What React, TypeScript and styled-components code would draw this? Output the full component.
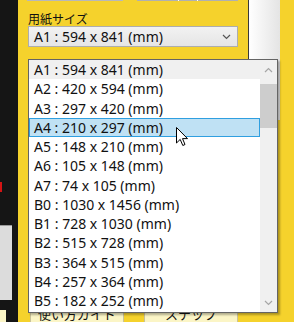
import styled, { createGlobalStyle } from 'styled-components';

const GlobalStyle = createGlobalStyle`
  html, body {
    margin: 0;
    padding: 0;
    background: #f5d22c;
  }
`;

const sizes = [
  'A1 : 594 x 841 (mm)',
  'A2 : 420 x 594 (mm)',
  'A3 : 297 x 420 (mm)',
  'A4 : 210 x 297 (mm)',
  'A5 : 148 x 210 (mm)',
  'A6 : 105 x 148 (mm)',
  'A7 : 74 x 105 (mm)',
  'B0 : 1030 x 1456 (mm)',
  'B1 : 728 x 1030 (mm)',
  'B2 : 515 x 728 (mm)',
  'B3 : 364 x 515 (mm)',
  'B4 : 257 x 364 (mm)',
  'B5 : 182 x 252 (mm)',
];

const Screen = styled.div`
  position: relative;
  display: flex;
  width: 294px;
  height: 322px;
  overflow: hidden;
  background: #f5d22c;
  font-family: 'Noto Sans', 'Noto Sans CJK JP', sans-serif;
  color: #111;
`;

const SidePanel = styled.div`
  display: flex;
  flex-direction: column;
  width: 18px;
  flex-shrink: 0;
  background: #151515;
`;

const RedMark = styled.div`
  margin-top: 182px;
  width: 2px;
  height: 10px;
  background: #d41414;
`;

const GreyPane = styled.div`
  margin-top: 33px;
  width: 12px;
  height: 77px;
  background: #dcdcdc;
  border-top: 1px solid #9a9a9a;
`;

const CreamTab = styled.div`
  margin-top: 10px;
  width: 6px;
  height: 12px;
  background: #fbf5c6;
`;

const Main = styled.div`
  display: flex;
  gap: 10px;
  padding-left: 10px;
`;

const Column = styled.div`
  display: flex;
  flex-direction: column;
  width: 210px;
`;

const TopRow = styled.div`
  display: flex;
  height: 4px;
  margin-left: -1px;
`;

const TopInput = styled.div`
  width: 95px;
  background: #fdf8cc;
  border: 1px solid #b8b8b8;
  border-top: none;
`;

const TopButtons = styled.div`
  display: flex;
  margin-left: 14px;
  width: 101px;
  gap: 1px;
  background: #ffffff;
`;

const TopButton = styled.div<{ $w: number }>`
  width: ${(p) => p.$w}px;
  background: #dedede;
  border-bottom: 1px solid #b0b0b0;
`;

const Label = styled.div`
  margin-top: 11px;
  height: 14px;
  font-size: 12px;
  line-height: 14px;
  font-family: 'Noto Sans CJK JP', sans-serif;
`;

const SelectBox = styled.div`
  box-sizing: border-box;
  display: flex;
  align-items: center;
  justify-content: space-between;
  height: 29px;
  padding: 0 6px 0 5px;
  background: linear-gradient(#f2f2f2, #e5e5e5);
  border: 1px solid #adadad;
  font-size: 14px;
`;

const BottomRow = styled.div`
  display: flex;
  justify-content: space-between;
  margin-top: 254px;
  padding-left: 2px;
`;

const BottomButton = styled.div<{ $w: number }>`
  box-sizing: border-box;
  width: ${(p) => p.$w}px;
  height: 24px;
  padding-top: 4px;
  text-align: center;
  background: #fbf5c6;
  border: 1px solid #c9c29a;
  font-size: 13px;
  line-height: 16px;
  font-family: 'Noto Sans CJK JP', sans-serif;
`;

const SideStrip = styled.div`
  width: 31px;
  height: 120px;
  border-left: 1px solid #3a3a3a;
  background: linear-gradient(90deg, #ffffff, #e4e4e4);
`;

const Popup = styled.div`
  position: absolute;
  left: 28px;
  top: 59px;
  box-sizing: border-box;
  display: flex;
  width: 250px;
  height: 254px;
  background: #ffffff;
  border: 1px solid #646464;
  box-shadow: 2px 2px 2px rgba(0, 0, 0, 0.3);
`;

const List = styled.div`
  flex: 1;
  display: flex;
  flex-direction: column;
`;

const Item = styled.div<{ $shaded?: boolean; $active?: boolean }>`
  box-sizing: border-box;
  height: 19.25px;
  flex-shrink: 0;
  padding-left: ${(p) => (p.$active ? 4 : 5)}px;
  font-size: 14px;
  line-height: ${(p) => (p.$active ? 17.25 : 19.25)}px;
  white-space: nowrap;
  background: ${(p) => (p.$active ? '#bfe1f4' : p.$shaded ? '#f0f0f0' : '#ffffff')};
  border: ${(p) => (p.$active ? '1px solid #2f9fe0' : 'none')};
`;

const ScrollTrack = styled.div`
  display: flex;
  flex-direction: column;
  width: 17px;
  background: #f0f0f0;
`;

const ScrollArrow = styled.div`
  display: flex;
  align-items: center;
  justify-content: center;
  height: 19px;
`;

const Thumb = styled.div`
  margin-top: 5px;
  height: 44px;
  background: #cdcdcd;
`;

const ScrollGap = styled.div`
  flex: 1;
`;

const Cursor = styled.svg`
  position: absolute;
  left: 176px;
  top: 127px;
`;

const Chevron = ({ up, color }: { up?: boolean; color: string }) => (
  <svg width="9" height="6" viewBox="0 0 9 6">
    <path
      d={up ? 'M1 5 L4.5 1.5 L8 5' : 'M1 1 L4.5 4.5 L8 1'}
      fill="none"
      stroke={color}
      strokeWidth="1.2"
    />
  </svg>
);

export default function App() {
  return (
    <>
      <GlobalStyle />
      <Screen>
        <SidePanel>
          <RedMark />
          <GreyPane />
          <CreamTab />
        </SidePanel>
        <Main>
          <Column>
            <TopRow>
              <TopInput />
              <TopButtons>
                <TopButton $w={41} />
                <TopButton $w={18} />
                <TopButton $w={40} />
              </TopButtons>
            </TopRow>
            <Label>用紙サイズ</Label>
            <SelectBox>
              <span>{sizes[0]}</span>
              <Chevron color="#555" />
            </SelectBox>
            <BottomRow>
              <BottomButton $w={94}>使い方ガイド</BottomButton>
              <BottomButton $w={94}>ステップ</BottomButton>
            </BottomRow>
          </Column>
          <SideStrip />
        </Main>
        <Popup>
          <List>
            {sizes.map((s, i) => (
              <Item key={s} $shaded={i === 0} $active={i === 3}>
                {s}
              </Item>
            ))}
          </List>
          <ScrollTrack>
            <ScrollArrow>
              <Chevron up color="#a6a6a6" />
            </ScrollArrow>
            <Thumb />
            <ScrollGap />
            <ScrollArrow>
              <Chevron color="#a6a6a6" />
            </ScrollArrow>
          </ScrollTrack>
        </Popup>
        <Cursor width="13" height="20" viewBox="0 0 13 20">
          <path
            d="M0.5 0.5 L0.5 16 L4.2 12.4 L6.8 18.5 L9 17.5 L6.5 11.6 L11.5 11.6 Z"
            fill="#ffffff"
            stroke="#000000"
            strokeWidth="1"
            strokeLinejoin="round"
          />
        </Cursor>
      </Screen>
    </>
  );
}
